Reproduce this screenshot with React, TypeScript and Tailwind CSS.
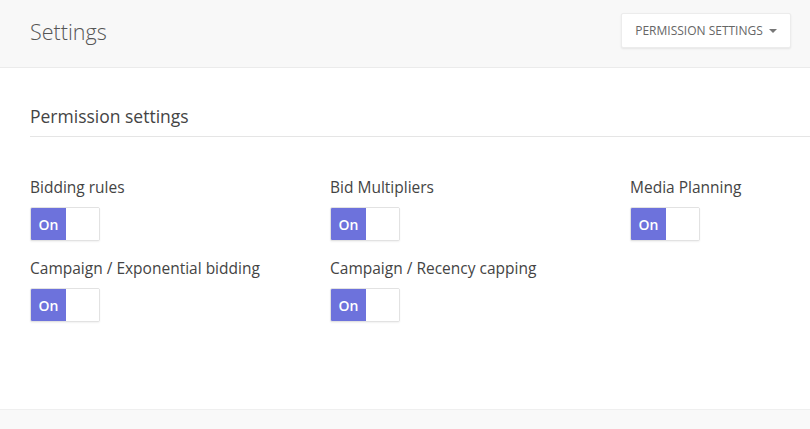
import { useState } from 'react'

const permissions = [
  'Bidding rules',
  'Bid Multipliers',
  'Media Planning',
  'Campaign / Exponential bidding',
  'Campaign / Recency capping',
]

function Toggle({ on, onChange }: { on: boolean; onChange: () => void }) {
  return (
    <button
      onClick={onChange}
      className="flex h-[34px] w-[70px] overflow-hidden rounded-[2px] border border-[#e2e2e2] bg-white shadow-[0_1px_2px_rgba(0,0,0,0.06)]"
    >
      {on ? (
        <>
          <span className="flex h-full w-[35px] items-center justify-center bg-[#6d72dc] text-[14px] font-semibold text-white">On</span>
          <span className="h-full flex-1 bg-white" />
        </>
      ) : (
        <>
          <span className="h-full flex-1 bg-white" />
          <span className="flex h-full w-[35px] items-center justify-center bg-[#eeeeee] text-[14px] text-[#777]">Off</span>
        </>
      )}
    </button>
  )
}

export default function App() {
  const [state, setState] = useState<boolean[]>(permissions.map(() => true))

  return (
    <div className="flex min-h-[429px] flex-col bg-white font-['Open_Sans',sans-serif] text-[#333]">
      {/* Header */}
      <div className="flex h-[68px] items-center justify-between border-b border-[#ebebeb] bg-[#f8f8f8] pl-[30px] pr-[19px]">
        <h1 className="-mt-[2px] text-[21.5px] font-light text-[#555]">Settings</h1>
        <button className="-mt-[6px] flex h-[35px] w-[170px] items-center justify-center gap-[6px] rounded-[2px] border border-[#ececec] bg-white text-[12px] text-[#666] shadow-[0_1px_2px_rgba(0,0,0,0.08)]">
          PERMISSION SETTINGS
          <span className="mt-[1px] border-x-[4px] border-t-[4px] border-x-transparent border-t-[#777]" />
        </button>
      </div>

      {/* Content */}
      <div className="flex-1 pl-[30px] pt-[36px]">
        <h2 className="border-b border-[#e5e5e5] pb-[8px] text-[17.5px] leading-[24px] text-[#444]">Permission settings</h2>
        <div className="grid grid-cols-[300px_300px_1fr] gap-y-[16px] pt-[39px]">
          {permissions.map((p, i) => (
            <div key={p} className="flex flex-col">
              <span className="mb-[9px] text-[15.5px] leading-[22px] text-[#444]">{p}</span>
              <Toggle on={state[i]} onChange={() => setState(s => s.map((v, j) => (j === i ? !v : v)))} />
            </div>
          ))}
        </div>
      </div>

      {/* Footer */}
      <div className="h-[20px] border-t border-[#efefef] bg-[#f9f9f9]" />
    </div>
  )
}
